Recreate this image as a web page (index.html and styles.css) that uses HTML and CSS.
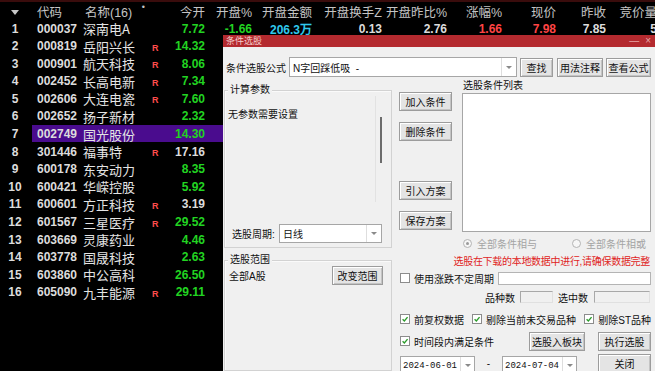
FILE: index.html
```html
<!DOCTYPE html>
<html lang="zh-CN">
<head>
  <meta charset="UTF-8">
  <meta name="viewport" content="width=device-width, initial-scale=1">
  <title>条件选股</title>
  <link rel="stylesheet" href="styles.css">
</head>
<body>
  <div class="quotes">
    <div class="q-row q-head">
      <div class="c-no"><span class="sort-tri"></span></div>
      <div class="c-code">代码</div>
      <div class="c-name"><span>名称(16)</span><span class="dot">•</span></div>
      <div></div>
      <div class="num">今开</div>
      <div class="num">开盘%</div>
      <div class="num">开盘金额</div>
      <div class="num">开盘换手Z</div>
      <div class="num">开盘昨比%</div>
      <div class="num">涨幅%</div>
      <div class="num">现价</div>
      <div class="num">昨收</div>
      <div class="num">竞价量</div>
    </div>

    <div class="q-row">
      <div class="c-no">1</div><div class="c-code">000037</div><div class="c-name">深南电A</div><div class="c-r"></div>
      <div class="num g">7.72</div><div class="num g">-1.66</div><div class="num cy">206.3万</div><div class="num">0.13</div>
      <div class="num">2.76</div><div class="num r">1.66</div><div class="num r">7.98</div><div class="num">7.85</div><div class="num">5</div>
    </div>
    <div class="q-row">
      <div class="c-no">2</div><div class="c-code">000819</div><div class="c-name">岳阳兴长</div><div class="c-r">R</div><div class="num g">14.32</div>
    </div>
    <div class="q-row">
      <div class="c-no">3</div><div class="c-code">000901</div><div class="c-name">航天科技</div><div class="c-r">R</div><div class="num g">8.06</div>
    </div>
    <div class="q-row">
      <div class="c-no">4</div><div class="c-code">002452</div><div class="c-name">长高电新</div><div class="c-r">R</div><div class="num g">7.34</div>
    </div>
    <div class="q-row">
      <div class="c-no">5</div><div class="c-code">002606</div><div class="c-name">大连电瓷</div><div class="c-r">R</div><div class="num g">7.60</div>
    </div>
    <div class="q-row">
      <div class="c-no">6</div><div class="c-code">002652</div><div class="c-name">扬子新材</div><div class="c-r"></div><div class="num g">2.32</div>
    </div>
    <div class="q-row selected">
      <div class="c-no">7</div><div class="c-code">002749</div><div class="c-name">国光股份</div><div class="c-r"></div><div class="num g">14.30</div>
    </div>
    <div class="q-row">
      <div class="c-no">8</div><div class="c-code">301446</div><div class="c-name">福事特</div><div class="c-r">R</div><div class="num">17.16</div>
    </div>
    <div class="q-row">
      <div class="c-no">9</div><div class="c-code">600178</div><div class="c-name">东安动力</div><div class="c-r"></div><div class="num g">8.35</div>
    </div>
    <div class="q-row">
      <div class="c-no">10</div><div class="c-code">600421</div><div class="c-name">华嵘控股</div><div class="c-r"></div><div class="num g">5.92</div>
    </div>
    <div class="q-row">
      <div class="c-no">11</div><div class="c-code">600601</div><div class="c-name">方正科技</div><div class="c-r">R</div><div class="num">3.19</div>
    </div>
    <div class="q-row">
      <div class="c-no">12</div><div class="c-code">601567</div><div class="c-name">三星医疗</div><div class="c-r">R</div><div class="num g">29.52</div>
    </div>
    <div class="q-row">
      <div class="c-no">13</div><div class="c-code">603669</div><div class="c-name">灵康药业</div><div class="c-r"></div><div class="num g">4.46</div>
    </div>
    <div class="q-row">
      <div class="c-no">14</div><div class="c-code">603778</div><div class="c-name">国晟科技</div><div class="c-r"></div><div class="num g">2.63</div>
    </div>
    <div class="q-row">
      <div class="c-no">15</div><div class="c-code">603860</div><div class="c-name">中公高科</div><div class="c-r"></div><div class="num g">26.50</div>
    </div>
    <div class="q-row">
      <div class="c-no">16</div><div class="c-code">605090</div><div class="c-name">九丰能源</div><div class="c-r">R</div><div class="num g">29.11</div>
    </div>
  </div>

  <!-- 条件选股 窗口 -->
  <div class="dialog">
    <div class="titlebar">
      <span>条件选股</span>
      <span class="win-ctl"><span>—</span><span>×</span></span>
    </div>
    <div class="dlg-body">
      <div class="formula-row">
        <span class="formula-lbl">条件选股公式</span>
        <div class="combo formula-combo"><span class="combo-val">N字回踩低吸 &nbsp;-</span><span class="combo-arrow"><i></i></span></div>
        <button class="btn btn-find">查找</button>
        <button class="btn btn-help">用法注释</button>
        <button class="btn btn-view">查看公式</button>
      </div>

      <div class="dlg-main">
        <div class="left-col">
          <div class="group group-params">
            <div class="group-title">计算参数</div>
            <div class="param-area">
              <div class="param-text">无参数需要设置</div>
              <div class="param-scroll"><div class="thumb"></div></div>
            </div>
            <div class="period-row">
              <span class="period-lbl">选股周期:</span>
              <div class="combo period-combo"><span class="combo-val">日线</span><span class="combo-arrow"><i></i></span></div>
            </div>
          </div>
          <div class="group group-range">
            <div class="group-title">选股范围</div>
            <div class="range-row">
              <span>全部A股</span>
              <button class="btn btn-range">改变范围</button>
            </div>
          </div>
        </div>

        <div class="right-col">
          <div class="cond-area">
            <div class="cond-btns">
              <button class="btn btn-add">加入条件</button>
              <button class="btn btn-del">删除条件</button>
              <button class="btn btn-load">引入方案</button>
              <button class="btn btn-save">保存方案</button>
            </div>
            <div class="cond-list">
              <div class="list-lbl">选股条件列表</div>
              <div class="listbox"></div>
            </div>
          </div>

          <div class="radio-row">
            <span class="radio on"></span><span class="radio-txt">全部条件相与</span>
            <span class="radio second"></span><span class="radio-txt">全部条件相或</span>
          </div>

          <div class="warn">选股在下载的本地数据中进行,请确保数据完整</div>

          <div class="use-row">
            <span class="chk"></span><span class="chk-txt">使用涨跌不定周期</span>
            <div class="edit use-edit"></div>
          </div>

          <div class="count-row">
            <span>品种数</span><div class="edit off count-a"></div>
            <span class="count-lbl2">选中数</span><div class="edit off count-b"></div>
          </div>

          <div class="opt-row">
            <div class="opt opt-1"><span class="chk"><svg viewBox="0 0 10 10"><path d="M2 5.2 L4.2 7.4 L8.2 2.6" /></svg></span><span class="chk-txt">前复权数据</span></div>
            <div class="opt opt-2"><span class="chk"><svg viewBox="0 0 10 10"><path d="M2 5.2 L4.2 7.4 L8.2 2.6" /></svg></span><span class="chk-txt">剔除当前未交易品种</span></div>
            <div class="opt"><span class="chk"><svg viewBox="0 0 10 10"><path d="M2 5.2 L4.2 7.4 L8.2 2.6" /></svg></span><span class="chk-txt">剔除ST品种</span></div>
          </div>

          <div class="period-opt-row">
            <span class="chk"><svg viewBox="0 0 10 10"><path d="M2 5.2 L4.2 7.4 L8.2 2.6" /></svg></span><span class="chk-txt">时间段内满足条件</span>
            <button class="btn btn-block">选股入板块</button>
            <button class="btn btn-run">执行选股</button>
          </div>

          <div class="date-row">
            <div class="combo date-combo"><span class="combo-val">2024-06-01</span><span class="combo-arrow"><i></i></span></div>
            <span class="date-dash">-</span>
            <div class="combo date-combo"><span class="combo-val">2024-07-04</span><span class="combo-arrow"><i></i></span></div>
            <button class="btn btn-close">关闭</button>
          </div>
        </div>
      </div>
    </div>
  </div>
</body>
</html>
```

FILE: styles.css
```css
* {
  box-sizing: border-box;
}

html,
body {
  margin: 0;
}

body {
  width: 655px;
  height: 371px;
  overflow: hidden;
  position: relative;
  background-color: #000;
  font-family: "Liberation Sans", Arial, sans-serif;
}

/* 行情列表 */
.quotes {
  width: 657px;
  border-top: 2px solid #3a0c0c;
}

.q-row {
  display: grid;
  grid-template-columns: 32px 48px 70px 15px 40px 47px 60px 70px 65px 55px 54px 50px 51px;
  height: 17.6px;
  align-items: center;
  font-size: 12px;
  font-weight: bold;
  color: #dcdcdc;
  white-space: nowrap;
}

.q-head {
  height: 17px;
  font-family: "Liberation Sans", "Noto Sans CJK SC", sans-serif;
  font-size: 12.5px;
  font-weight: normal;
  color: #c4c4c4;
}

.q-row.selected {
  background: linear-gradient(to right, transparent 32px, #4a0c8e 32px);
}

.c-no {
  text-align: center;
  padding-right: 2px;
}

.sort-tri {
  display: inline-block;
  border-left: 4px solid transparent;
  border-right: 4px solid transparent;
  border-top: 5px solid #c8c8c8;
  vertical-align: middle;
}

.c-code {
  padding-left: 5px;
}

.c-name {
  padding-left: 3px;
  font-family: "Noto Sans CJK SC", sans-serif;
  font-size: 13px;
  font-weight: normal;
  color: #e4e4e4;
}

.q-head .c-name {
  display: flex;
  justify-content: space-between;
  padding: 0 5px 0 5px;
  font-family: "Liberation Sans", "Noto Sans CJK SC", sans-serif;
  font-size: 12.5px;
  color: #c4c4c4;
}

.q-head .dot {
  font-size: 9px;
}

.c-r {
  padding: 3px 0 0 2px;
  font-size: 9px;
  color: #ff4c4c;
}

.num {
  text-align: right;
}

.g {
  color: #22d422;
}

.r {
  color: #ff4444;
}

.cy {
  color: #30c8ec;
}

/* 条件选股 窗口 */
.dialog {
  position: absolute;
  left: 223px;
  top: 35px;
  width: 432px;
  height: 340px;
  background-color: #f0f0f0;
  font-family: "Liberation Sans", "Noto Sans CJK SC", sans-serif;
  font-size: 10px;
  color: #111;
  white-space: nowrap;
}

.titlebar {
  height: 12px;
  background-color: #b42a2f;
  color: #f4d0d0;
  font-size: 9px;
  line-height: 12px;
  padding: 0 4px 0 3px;
  display: flex;
  justify-content: space-between;
}

.win-ctl {
  display: flex;
  gap: 6px;
  color: #e8a8a8;
  font-size: 10px;
}

.dlg-body {
  padding: 10px 4px 0 1px;
}

.formula-row {
  display: flex;
  align-items: center;
  height: 20px;
}

.formula-lbl {
  width: 65px;
  padding-left: 2px;
}

.combo {
  display: flex;
  background-color: #fff;
  border: 1px solid #a6a6a6;
  height: 19px;
}

.combo-val {
  flex: 1;
  padding-left: 3px;
  display: flex;
  align-items: center;
  overflow: hidden;
}

.combo-arrow {
  width: 15px;
  border-left: 1px solid #dedede;
  display: flex;
  align-items: center;
  justify-content: center;
}

.combo-arrow i {
  border-left: 3px solid transparent;
  border-right: 3px solid transparent;
  border-top: 3px solid #8a8a8a;
}

.formula-combo {
  width: 228px;
  height: 20px;
}

.btn {
  height: 19px;
  padding: 0;
  font-family: inherit;
  font-size: 10px;
  color: #111;
  background-color: #e4e4e4;
  border: 1px solid #9c9c9c;
  box-shadow: inset 1px 1px 0 #fff, inset -1px -1px 0 #c4c4c4;
  white-space: nowrap;
}

.btn-find {
  width: 33px;
  margin-left: 3px;
}

.btn-help {
  width: 46px;
  margin-left: 4px;
}

.btn-view {
  width: 45px;
  margin-left: 3px;
}

.dlg-main {
  display: flex;
  gap: 7px;
}

.left-col {
  width: 168px;
  height: 294px;
  display: flex;
  flex-direction: column;
}

.group {
  border: 1px solid #d2d2d2;
  box-shadow: inset 1px 1px 0 #fafafa;
}

.group-title {
  width: fit-content;
  margin: -7px 0 0 3px;
  padding: 0 2px;
  line-height: 12px;
  background-color: #f0f0f0;
}

.group-params {
  margin-top: 13px;
  height: 158px;
}

.param-area {
  display: flex;
  height: 106px;
  margin-right: 8px;
}

.param-text {
  flex: 1;
  padding: 13px 0 0 3px;
  line-height: 12px;
  border-right: 1px solid #e2e2e2;
}

.param-scroll {
  width: 7px;
  padding: 21px 0 0 4px;
}

.thumb {
  width: 2px;
  height: 46px;
  background-color: #6c6c6c;
}

.period-row {
  display: flex;
  align-items: center;
  margin-top: 22px;
  padding-left: 7px;
}

.period-lbl {
  width: 47px;
}

.period-combo {
  width: 103px;
}

.group-range {
  margin-top: 12px;
  flex: 1;
}

.range-row {
  display: flex;
  justify-content: space-between;
  align-items: center;
  padding: 0 8px 0 4px;
}

.btn-range {
  width: 51px;
}

.right-col {
  width: 252px;
}

.cond-area {
  display: flex;
  gap: 10px;
  height: 157px;
}

.cond-btns {
  width: 53px;
  display: flex;
  flex-direction: column;
}

.btn-add {
  margin-top: 15px;
}

.btn-del {
  margin-top: 11px;
}

.btn-load {
  margin-top: 40px;
}

.btn-save {
  margin-top: 11px;
}

.cond-list {
  flex: 1;
}

.list-lbl {
  margin-top: 3px;
  padding-left: 1px;
  line-height: 12px;
}

.listbox {
  margin-top: 1px;
  height: 139px;
  background-color: #fff;
  border: 1px solid #a6a6a6;
}

.radio-row {
  display: flex;
  align-items: center;
  height: 18px;
  padding: 0 5px 0 64px;
  color: #a4a4a4;
}

.radio {
  width: 9px;
  height: 9px;
  border: 1px solid #b4b4b4;
  border-radius: 50%;
  background-color: #f6f6f6;
  display: flex;
  align-items: center;
  justify-content: center;
}

.radio.on::after {
  content: "";
  width: 3px;
  height: 3px;
  border-radius: 50%;
  background-color: #9a9a9a;
}

.radio.second {
  margin-left: auto;
}

.radio-txt {
  margin-left: 5px;
}

.warn {
  height: 19px;
  line-height: 19px;
  text-align: right;
  padding-right: 1px;
  color: #e02424;
  letter-spacing: -0.3px;
}

.use-row {
  display: flex;
  align-items: center;
  height: 14px;
  padding-left: 1px;
}

.chk {
  width: 10px;
  height: 10px;
  flex: none;
  border: 1px solid #8c8c8c;
  background-color: #fff;
  display: inline-flex;
}

.chk svg {
  width: 8px;
  height: 8px;
}

.chk svg path {
  fill: none;
  stroke: #2c9c2c;
  stroke-width: 1.7;
}

.chk-txt {
  margin-left: 4px;
}

.edit {
  height: 13px;
  background-color: #fff;
  border: 1px solid #b4b4b4;
}

.edit.off {
  height: 12px;
  background-color: #f0f0f0;
  border-color: #a8a8a8 #e0e0e0 #e0e0e0 #a8a8a8;
}

.use-edit {
  margin-left: auto;
  width: 153px;
}

.count-row {
  display: flex;
  align-items: center;
  justify-content: flex-end;
  height: 24px;
  padding-right: 1px;
}

.count-a {
  width: 33px;
  margin-left: 5px;
}

.count-lbl2 {
  margin-left: 5px;
}

.count-b {
  width: 56px;
  margin-left: 6px;
}

.opt-row {
  display: flex;
  align-items: center;
  height: 20px;
  padding-left: 1px;
}

.opt {
  display: flex;
  align-items: center;
}

.opt-1 {
  width: 73px;
}

.opt-2 {
  width: 114px;
}

.period-opt-row {
  display: flex;
  align-items: center;
  height: 24px;
  padding-left: 1px;
}

.btn-block {
  width: 56px;
  margin-left: auto;
}

.btn-run {
  width: 53px;
  margin-left: 13px;
}

.date-row {
  display: flex;
  align-items: flex-start;
  height: 24px;
  padding-left: 1px;
}

.date-combo {
  width: 75px;
  height: 19px;
  margin-top: 3px;
  font-family: "Liberation Mono", monospace;
  font-size: 9px;
}

.date-combo .combo-val {
  padding-left: 2px;
}

.date-combo .combo-arrow {
  width: 14px;
}

.date-dash {
  width: 27px;
  text-align: center;
  line-height: 22px;
}

.btn-close {
  width: 53px;
  margin: 1px 0 0 auto;
}
```
